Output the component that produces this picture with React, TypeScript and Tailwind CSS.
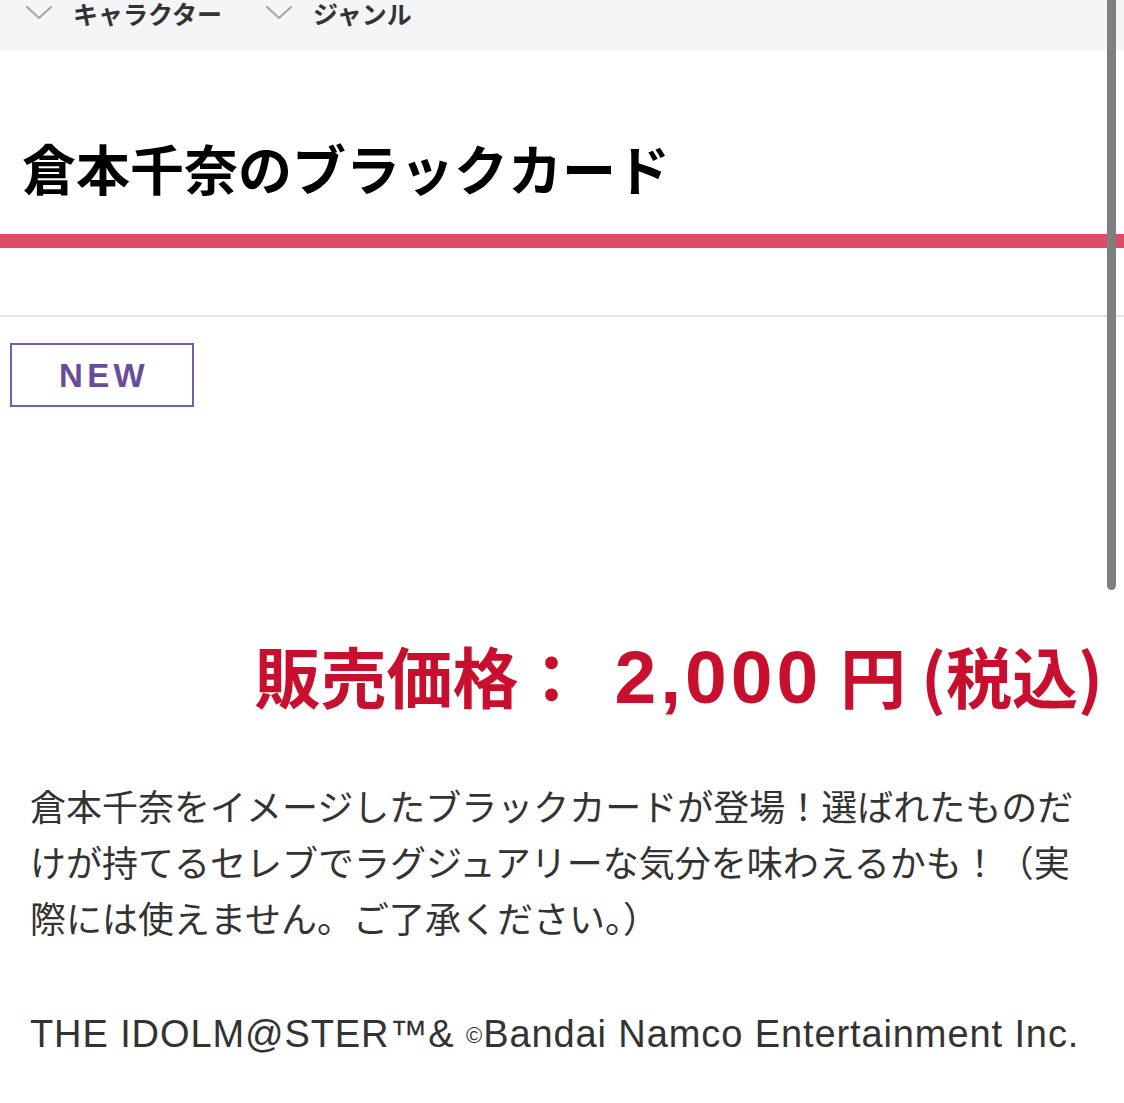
import React from "react";

const jp = { fontFamily: '"Noto Sans CJK JP", "Noto Sans", sans-serif' };

function Chevron() {
  return (
    <svg width="28" height="16" viewBox="0 0 28 16" fill="none" className="shrink-0">
      <path d="M2 2 L14 13 L26 2" stroke="#a8a8a8" strokeWidth="2.2" strokeLinecap="round" strokeLinejoin="round" />
    </svg>
  );
}

export default function App() {
  return (
    <div className="relative w-[1124px] min-h-[1103px] bg-white overflow-hidden" style={jp}>
      {/* top nav bar (scrolled) */}
      <div className="h-[50px] bg-[#f4f5f7] overflow-hidden">
        <div className="flex items-center pl-[25px] -mt-[7px] h-[40px] text-[25px] leading-none font-bold text-[#333]">
          <Chevron />
          <span className="ml-[20px]">キャラクター</span>
          <span className="ml-[43px]"><Chevron /></span>
          <span className="ml-[20px]">ジャンル</span>
        </div>
      </div>

      {/* title */}
      <div className="pt-[86px] pb-[34px] pl-[22px]">
        <h1 className="text-[54px] leading-[64px] font-bold text-black">倉本千奈のブラックカード</h1>
      </div>
      <div className="h-[14px] bg-[#e04a67]" />
      <div className="h-[67px]" />
      <div className="h-[2px] bg-[#e3e3e3]" />

      {/* NEW badge */}
      <div className="pt-[26px] pl-[10px]">
        <div className="w-[184px] h-[64px] border-2 border-[#7b5ca8] flex items-center justify-center">
          <span
            className="text-[33px] font-bold tracking-[0.13em] text-[#6a4c9c] leading-none pl-[4px]"
            style={{ fontFamily: '"Liberation Sans", Arial, sans-serif' }}
          >
            NEW
          </span>
        </div>
      </div>

      {/* price */}
      <div className="mt-[227px] pr-[21px] flex justify-end">
        <p className="text-[66px] leading-[80px] font-bold text-[#c8102e] whitespace-nowrap">
          販売価格：
          <span
            className="ml-[30px] mr-[18px] text-[75px] tracking-[4px]"
            style={{ fontFamily: '"Liberation Sans", Arial, sans-serif' }}
          >
            2,000
          </span>
          円 (税込)
        </p>
      </div>

      {/* description */}
      <div className="mt-[60px] px-[30px] text-[#333]">
        <p className="text-[36px] leading-[56px]">
          倉本千奈をイメージしたブラックカードが登場！選ばれたものだけが持てるセレブでラグジュアリーな気分を味わえるかも！（実際には使えません。ご了承ください。）
        </p>
        <p
          className="mt-[61px] text-[38px] leading-[56px] tracking-[0.9px] whitespace-nowrap"
          style={{ fontFamily: '"Liberation Sans", Arial, sans-serif' }}
        >
          THE IDOLM@STER™&amp; <span className="text-[22px] align-[4px]">©</span>Bandai Namco Entertainment Inc.
        </p>
      </div>

      {/* overlay scrollbar */}
      <div className="absolute left-[1107px] top-0 w-[9px] h-[590px] rounded-b-full bg-[#7f7f7f]" />
    </div>
  );
}
